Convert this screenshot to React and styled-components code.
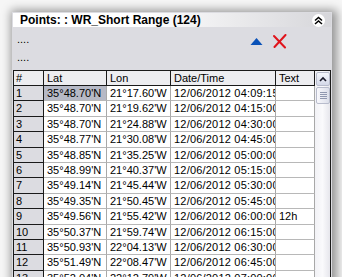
import React from "react";
import styled, { createGlobalStyle } from "styled-components";

const Global = createGlobalStyle`
  html, body { margin: 0; padding: 0; background: #f6f6f6; overflow: hidden; }
  body { width: 342px; height: 277px; font-family: "Liberation Sans", Arial, sans-serif; }
`;

const Page = styled.div`
  padding: 12px 10px 0 12px;
  height: 277px;
  box-sizing: border-box;
  overflow: hidden;
`;

const Panel = styled.div`
  width: 320px;
  height: 300px;
  box-sizing: border-box;
  padding: 1px 1px 0 1px;
  background: #dcdce1;
  box-shadow: 2px 1px 9px 3px rgba(0, 0, 0, 0.4);
  display: flex;
  flex-direction: column;
`;

const TitleBar = styled.div`
  height: 14px;
  display: flex;
  align-items: center;
  justify-content: space-between;
  padding: 0 6px 0 7px;
  background: linear-gradient(to right, #ffffff 0%, #ffffff 40%, #d6d6da 100%);
`;

const Title = styled.span`
  font-weight: bold;
  font-size: 12px;
  color: #000;
  line-height: 14px;
`;

const CollapseButton = styled.span`
  width: 13px;
  height: 13px;
  border-radius: 50%;
  background: #fff;
  display: flex;
  align-items: center;
  justify-content: center;
  margin-top: 1px;
`;

const Toolbar = styled.div`
  height: 43px;
  display: flex;
  justify-content: space-between;
  padding: 0 0 0 4px;
`;

const DotsColumn = styled.div`
  display: flex;
  flex-direction: column;
  padding-top: 5px;
  gap: 4px;
`;

const Dots = styled.span`
  font-size: 11px;
  line-height: 14px;
  color: #000;
`;

const Actions = styled.div`
  display: flex;
  gap: 10px;
  padding: 7px 44px 0 0;
  align-items: flex-start;
`;

const GridFrame = styled.div`
  display: flex;
  border-top: 1px solid #1a1a1a;
  border-left: 1px solid #1a1a1a;
  border-right: 1px solid #1a1a1a;
  background: #fff;
  flex: 1;
  overflow: hidden;
`;

const Table = styled.div`
  display: grid;
  grid-template-columns: 30px 63px 64px 105px 39px;
  grid-template-rows: 15px;
  grid-auto-rows: 15.4px;
  align-content: start;
`;

const Cell = styled.div`
  box-sizing: border-box;
  height: 100%;
  font-size: 11px;
  line-height: 14px;
  color: #000;
  white-space: nowrap;
  overflow: hidden;
  letter-spacing: ${(p) => (p.$spaced ? "0.2px" : "0")};
  padding-left: ${(p) => (p.$index ? "2px" : "3px")};
  border-right: 1px solid ${(p) => (p.$header || p.$index ? "#1a1a1a" : "#a8a8a8")};
  border-bottom: 1px solid ${(p) => (p.$header || p.$index ? "#1a1a1a" : "#b8b8b8")};
  background: ${(p) =>
    p.$selected ? "#b6b9c6" : p.$header ? "#ededf0" : p.$index ? "#dcdce1" : "#ffffff"};
`;

const ScrollTrack = styled.div`
  width: 16px;
  display: flex;
  flex-direction: column;
  background: linear-gradient(to right, #f2f2f6, #fafafc 50%, #e6e6ec);
  padding: 1px 0 0 1px;
  box-sizing: border-box;
`;

const ScrollButton = styled.div`
  width: 14px;
  height: 14px;
  box-sizing: border-box;
  border: 1px solid #b8bccc;
  border-radius: 2px;
  background: linear-gradient(#f4f6fc, #d4d8e8);
  display: flex;
  align-items: center;
  justify-content: center;
`;

const ScrollThumb = styled.div`
  width: 14px;
  height: 17px;
  margin-top: 1px;
  box-sizing: border-box;
  border: 1px solid #b8bccc;
  border-radius: 2px;
  background: linear-gradient(to right, #f8f8fc, #dcdfea);
  display: flex;
  flex-direction: column;
  align-items: center;
  justify-content: center;
  gap: 1px;
`;

const Grip = styled.span`
  width: 7px;
  height: 1px;
  background: #9098b0;
`;

const rows = [
  ["1", "35°48.70'N", "21°17.60'W", "12/06/2012 04:09:15", ""],
  ["2", "35°48.70'N", "21°19.62'W", "12/06/2012 04:15:00", ""],
  ["3", "35°48.70'N", "21°24.88'W", "12/06/2012 04:30:00", ""],
  ["4", "35°48.77'N", "21°30.08'W", "12/06/2012 04:45:00", ""],
  ["5", "35°48.85'N", "21°35.25'W", "12/06/2012 05:00:00", ""],
  ["6", "35°48.99'N", "21°40.37'W", "12/06/2012 05:15:00", ""],
  ["7", "35°49.14'N", "21°45.44'W", "12/06/2012 05:30:00", ""],
  ["8", "35°49.35'N", "21°50.45'W", "12/06/2012 05:45:00", ""],
  ["9", "35°49.56'N", "21°55.42'W", "12/06/2012 06:00:00", "12h"],
  ["10", "35°50.37'N", "21°59.74'W", "12/06/2012 06:15:00", ""],
  ["11", "35°50.93'N", "22°04.13'W", "12/06/2012 06:30:00", ""],
  ["12", "35°51.49'N", "22°08.47'W", "12/06/2012 06:45:00", ""],
  ["13", "35°52.04'N", "22°12.79'W", "12/06/2012 07:00:00", ""],
];

const headers = ["#", "Lat", "Lon", "Date/Time", "Text"];

export default function App() {
  return (
    <>
      <Global />
      <Page>
        <Panel>
          <TitleBar>
            <Title>Points: : WR_Short Range (124)</Title>
            <CollapseButton>
              <svg width="9" height="9" viewBox="0 0 9 9">
                <path d="M1 4.5 L4.5 1.5 L8 4.5 M1 8 L4.5 5 L8 8" fill="none" stroke="#000" strokeWidth="1.5" />
              </svg>
            </CollapseButton>
          </TitleBar>
          <Toolbar>
            <DotsColumn>
              <Dots>....</Dots>
              <Dots>....</Dots>
            </DotsColumn>
            <Actions>
              <svg width="13" height="12" viewBox="0 0 13 12" style={{ marginTop: 2, marginLeft: -2 }}>
                <polygon points="6.5,2 12.5,9 0.5,9" fill="#0a52b8" />
              </svg>
              <svg width="14" height="15" viewBox="0 0 14 15">
                <path d="M1 2 L12 13.5 M12.5 1 L1.5 13" stroke="#e0141c" strokeWidth="2" strokeLinecap="round" fill="none" />
              </svg>
            </Actions>
          </Toolbar>
          <GridFrame>
            <Table>
              {headers.map((h, i) => (
                <Cell key={h} $header $index={i === 0}>
                  {h}
                </Cell>
              ))}
              {rows.map((r) =>
                r.map((v, i) => (
                  <Cell
                    key={r[0] + "-" + i}
                    $index={i === 0}
                    $spaced={i === 3}
                    $selected={r[0] === "1" && i === 1}
                  >
                    {v}
                  </Cell>
                ))
              )}
            </Table>
            <ScrollTrack>
              <ScrollButton>
                <svg width="8" height="6" viewBox="0 0 8 6">
                  <path d="M1 5 L4 2 L7 5" fill="none" stroke="#1a1a2a" strokeWidth="1.6" />
                </svg>
              </ScrollButton>
              <ScrollThumb>
                <Grip />
                <Grip />
                <Grip />
                <Grip />
              </ScrollThumb>
            </ScrollTrack>
          </GridFrame>
        </Panel>
      </Page>
    </>
  );
}
